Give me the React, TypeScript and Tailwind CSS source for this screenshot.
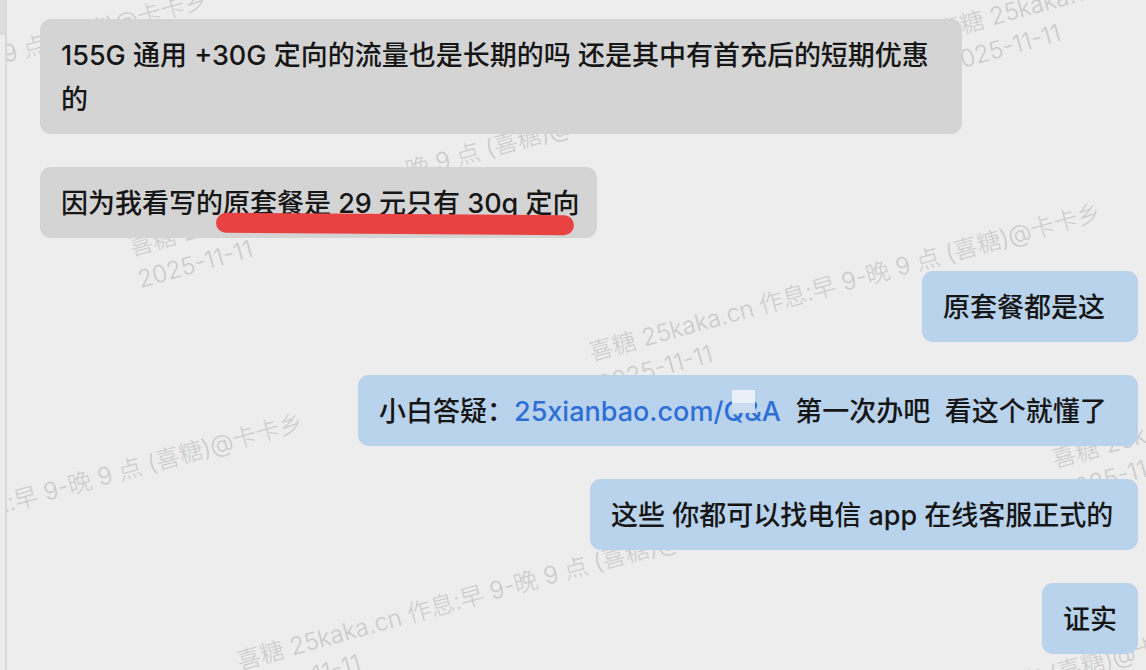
import React from "react";

type Mark = { cls: string };

// Tiled watermark stamps, placed behind the chat bubbles
const marks: Mark[] = [
  { cls: "left-[-315px] top-[124px]" },
  { cls: "left-[926px] top-[16px]" },
  { cls: "left-[118px] top-[232px]" },
  { cls: "left-[578px] top-[337px]" },
  { cls: "left-[1041px] top-[444px]" },
  { cls: "left-[-220px] top-[547px]" },
  { cls: "left-[226px] top-[646px]" },
  { cls: "left-[682px] top-[758px]" },
];

function Watermark({ cls }: Mark) {
  return (
    <div
      className={`absolute ${cls} origin-top-left -rotate-[15.5deg] whitespace-pre text-[24px] leading-[33px] font-light text-[#cbcbcb]`}
    >
      <div>喜糖 25kaka.cn 作息:早 9-晚 9 点 (喜糖)@卡卡乡</div>
      <div>2025-11-11</div>
    </div>
  );
}

function Bubble({
  side,
  width,
  children,
}: {
  side: "left" | "right";
  width: string;
  children: React.ReactNode;
}) {
  const tone = side === "left" ? "bg-[#d4d4d4] self-start" : "bg-[#b9d3ed] self-end";
  return (
    <div
      className={`relative ${tone} ${width} rounded-[11px] pl-[21px] pt-[15px] pb-[12px] whitespace-pre text-[27px] leading-[44px] font-medium text-[#161616]`}
    >
      {children}
    </div>
  );
}

export default function App() {
  return (
    <div className="h-[670px] w-[1146px] overflow-hidden bg-[#ededed] font-['Inter','Noto_Sans_CJK_SC',sans-serif]">
      <div className="flex h-full">
        <div className="w-[7px] shrink-0 border-r-2 border-[#d9d9d9]">
          <div className="h-[35px] bg-[#dcdcdc]" />
        </div>
        <div className="relative flex-1 overflow-hidden">
          <div className="pointer-events-none absolute inset-0">
            {marks.map((m, i) => (
              <Watermark key={i} cls={m.cls} />
            ))}
          </div>

          <div className="relative flex flex-col gap-[33px] pt-[19px] pl-[33px] pr-[8px]">
            <Bubble side="left" width="w-[922px]">
              155G 通用 +30G 定向的流量也是长期的吗 还是其中有首充后的短期优惠
              <br />的
            </Bubble>

            <Bubble side="left" width="w-[557px]">
              因为我看写的原套餐是 29 元只有 30g 定向
              <span className="absolute left-[176px] top-[47px] h-[20px] w-[358px] rotate-[0.4deg] rounded-full bg-[#e94242]" />
            </Bubble>

            <Bubble side="right" width="w-[216px]">
              原套餐都是这
            </Bubble>

            <Bubble side="right" width="w-[780px]">
              小白答疑：<span className="text-[#2e6fd6]">25xianbao.com/Q&amp;A</span>  第一次办吧  看这个就懂了
              <span className="absolute left-[374px] top-[15px] flex w-[23px] flex-col">
                <span className="h-[13px] bg-[#eaf0f7]" />
                <span className="h-[10px] bg-[#c9dcf0]" />
              </span>
            </Bubble>

            <Bubble side="right" width="w-[548px]">
              这些 你都可以找电信 app 在线客服正式的
            </Bubble>

            <Bubble side="right" width="w-[96px]">
              证实
            </Bubble>
          </div>
        </div>
      </div>
    </div>
  );
}
